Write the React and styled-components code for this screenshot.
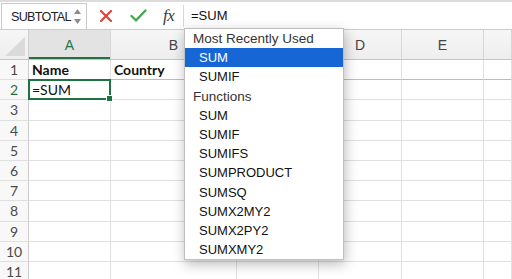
import React from "react";
import styled, { createGlobalStyle } from "styled-components";

const Global = createGlobalStyle`
  html, body { margin: 0; padding: 0; background: #fff; overflow: hidden; }
  * { box-sizing: border-box; }
`;

const UI = `"Liberation Sans", Arial, sans-serif`;
const CELL = `Lato, "Liberation Sans", sans-serif`;
const GREEN = "#1f7244";

const Window = styled.div`
  position: relative;
  width: 512px;
  height: 279px;
  overflow: hidden;
  font-family: ${UI};
  background: #fff;
`;

const FormulaBar = styled.div`
  display: flex;
  align-items: center;
  height: 30px;
  border-top: 2px solid #dcdcdc;
  border-bottom: 1px solid #cbcbcb;
`;

const NameBox = styled.div`
  align-self: stretch;
  margin: 1px 0 0 1px;
  width: 86px;
  border: 1px solid #c9c9c9;
  border-bottom: none;
  display: flex;
  align-items: center;
  padding-left: 9px;
  font-size: 12.6px;
  letter-spacing: -0.7px;
  color: #222;
  position: relative;
`;

const Stepper = styled.div`
  position: absolute;
  right: 5px;
  top: 5px;
  display: flex;
  flex-direction: column;
  gap: 5px;
`;

const IconSlot = styled.div`
  display: flex;
  align-items: center;
  margin-left: ${(p) => p.$ml}px;
  width: ${(p) => p.$w}px;
`;

const Fx = styled.span`
  font-family: "Liberation Serif", "Times New Roman", serif;
  font-style: italic;
  font-size: 17px;
  color: #3a3a3a;
  margin-left: 16px;
  width: 15px;
  letter-spacing: -0.5px;
  line-height: 1;
`;

const Divider = styled.div`
  width: 1px;
  height: 22px;
  background: #d6d6d6;
  margin-left: 5px;
`;

const FormulaText = styled.div`
  margin-left: 7px;
  font-size: 13px;
  color: #111;
`;

const COLS = "29px 82px 126px 82px 83px 82px 1fr";

const HeaderRow = styled.div`
  display: grid;
  grid-template-columns: ${COLS};
  height: 30px;
  background: linear-gradient(#f6f6f6, #eeeeee);
  border-bottom: 1px solid #c4c4c4;
`;

const Corner = styled.div`
  position: relative;
  border-right: 1px solid #cfcfcf;
`;

const ColHead = styled.div`
  display: flex;
  align-items: center;
  justify-content: center;
  border-right: 1px solid #d6d6d6;
  font-size: 14px;
  color: ${(p) => (p.$active ? GREEN : "#444")};
  background: ${(p) => (p.$active ? "#e3e3e3" : "transparent")};
  box-shadow: ${(p) => (p.$active ? `inset 0 -2px 0 ${GREEN}` : "none")};
`;

const Grid = styled.div`
  display: grid;
  grid-template-columns: ${COLS};
  grid-auto-rows: 20.2px;
`;

const RowHead = styled.div`
  display: flex;
  align-items: center;
  justify-content: center;
  background: #f8f8f8;
  border-right: 1px solid #cbcbcb;
  border-bottom: 1px solid #e0e0e0;
  font-family: ${CELL};
  font-size: 14px;
  color: ${(p) => (p.$active ? GREEN : "#4a4a4a")};
`;

const Cell = styled.div`
  position: relative;
  display: flex;
  align-items: center;
  padding-left: 3px;
  border-right: 1px solid #e0e0e0;
  border-bottom: 1px solid ${(p) => (p.$frozen ? "#bdbdbd" : "#e0e0e0")};
  font-family: ${CELL};
  font-size: 14px;
  font-weight: ${(p) => (p.$bold ? 700 : 400)};
  color: #111;
  white-space: nowrap;

  ${(p) =>
    p.$selected &&
    `
    &::after {
      content: "";
      position: absolute;
      left: -1px; top: -1px; right: -1px; bottom: -1px;
      border: 2px solid ${GREEN};
      pointer-events: none;
    }
    &::before {
      content: "";
      position: absolute;
      right: -3px; bottom: -3px;
      width: 5px; height: 5px;
      background: ${GREEN};
      border: 1px solid #fff;
      z-index: 2;
    }
  `}
`;

const Menu = styled.div`
  position: absolute;
  left: 184px;
  top: 28px;
  width: 160px;
  background: #fff;
  border: 1px solid #bfbfbf;
  box-shadow: 1px 4px 12px rgba(0, 0, 0, 0.28);
  z-index: 5;
`;

const MenuHeader = styled.div`
  height: 19.2px;
  display: flex;
  align-items: center;
  padding-left: 8px;
  font-size: 13.5px;
  color: #333;
`;

const MenuItem = styled.div`
  height: 19.2px;
  display: flex;
  align-items: center;
  padding-left: 14px;
  font-size: 13px;
  color: ${(p) => (p.$active ? "#fff" : "#111")};
  background: ${(p) => (p.$active ? "#1766d6" : "transparent")};
`;

const columns = ["A", "B", "C", "D", "E", ""];

const data = {
  1: { A: { text: "Name", bold: true }, B: { text: "Country", bold: true } },
  2: { A: { text: "=SUM", selected: true } },
};

const menu = [
  { type: "h", label: "Most Recently Used" },
  { label: "SUM", active: true },
  { label: "SUMIF" },
  { type: "h", label: "Functions" },
  { label: "SUM" },
  { label: "SUMIF" },
  { label: "SUMIFS" },
  { label: "SUMPRODUCT" },
  { label: "SUMSQ" },
  { label: "SUMX2MY2" },
  { label: "SUMX2PY2" },
  { label: "SUMXMY2" },
];

export default function App() {
  const rows = Array.from({ length: 11 }, (_, i) => i + 1);
  return (
    <Window>
      <Global />
      <FormulaBar>
        <NameBox>
          SUBTOTAL
          <Stepper>
            <svg width="7" height="5" viewBox="0 0 7 5">
              <path d="M3.5 0 L7 5 L0 5 Z" fill="#8c8c8c" />
            </svg>
            <svg width="7" height="5" viewBox="0 0 7 5">
              <path d="M0 0 L7 0 L3.5 5 Z" fill="#8c8c8c" />
            </svg>
          </Stepper>
        </NameBox>
        <IconSlot $ml={13} $w={12}>
          <svg width="12" height="12" viewBox="0 0 12 12">
            <path d="M1 1 L11 11 M11 1 L1 11" stroke="#e2423c" strokeWidth="2.2" strokeLinecap="round" />
          </svg>
        </IconSlot>
        <IconSlot $ml={18} $w={17}>
          <svg width="17" height="13" viewBox="0 0 17 13">
            <path d="M1.5 7 L6 11.3 L15.5 1.5" fill="none" stroke="#4aa84e" strokeWidth="2.4" strokeLinecap="round" strokeLinejoin="round" />
          </svg>
        </IconSlot>
        <Fx>fx</Fx>
        <Divider />
        <FormulaText>=SUM</FormulaText>
      </FormulaBar>

      <HeaderRow>
        <Corner>
          <svg width="29" height="30" viewBox="0 0 29 30" style={{ position: "absolute", left: 0, top: 0 }}>
            <path d="M5 26 L25 26 L25 7 Z" fill="#dadada" />
          </svg>
        </Corner>
        {columns.map((c, i) => (
          <ColHead key={i} $active={c === "A"}>
            {c}
          </ColHead>
        ))}
      </HeaderRow>

      <Grid>
        {rows.map((r) => (
          <React.Fragment key={r}>
            <RowHead $active={r === 2}>{r}</RowHead>
            {columns.map((c, i) => {
              const d = (data[r] && data[r][c]) || {};
              return (
                <Cell key={i} $bold={d.bold} $selected={d.selected} $frozen={r === 1}>
                  {d.text}
                </Cell>
              );
            })}
          </React.Fragment>
        ))}
      </Grid>

      <Menu>
        {menu.map((m, i) =>
          m.type === "h" ? (
            <MenuHeader key={i}>{m.label}</MenuHeader>
          ) : (
            <MenuItem key={i} $active={m.active}>
              {m.label}
            </MenuItem>
          )
        )}
      </Menu>
    </Window>
  );
}
